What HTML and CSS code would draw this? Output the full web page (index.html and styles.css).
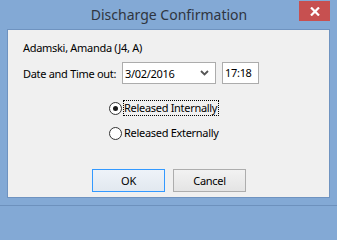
FILE: index.html
```html
<!DOCTYPE html>
<html>
<head>
<meta charset="utf-8">
<link rel="stylesheet" href="styles.css">
</head>
<body>
<div class="window">
  <div class="titlebar">
    <div class="title">Discharge Confirmation</div>
    <div class="close">
      <svg width="10" height="9" viewBox="0 0 10 9"><path d="M1 0.5 L9 8.5 M9 0.5 L1 8.5" stroke="#fff" stroke-width="2.2" fill="none"/></svg>
    </div>
  </div>
  <div class="client">
    <div class="patient">Adamski, Amanda (J4, A)</div>
    <div class="daterow">
      <div class="label">Date and Time out:</div>
      <div class="combo">
        <span class="combo-text">3/02/2016</span>
        <svg class="chev" width="9" height="6" viewBox="0 0 9 6"><path d="M1 1 L4.5 4.5 L8 1" stroke="#555" stroke-width="1.8" fill="none"/></svg>
      </div>
      <div class="timebox">17:18</div>
    </div>
    <div class="radios">
      <div class="radio">
        <span class="circle checked"></span>
        <span class="rlabel focus">Released Internally</span>
      </div>
      <div class="radio">
        <span class="circle"></span>
        <span class="rlabel">Released Externally</span>
      </div>
    </div>
    <div class="buttons">
      <div class="btn default">OK</div>
      <div class="btn">Cancel</div>
    </div>
  </div>
</div>
</body>
</html>
```

FILE: styles.css
```css
html, body {
  margin: 0;
  padding: 0;
  width: 337px;
  height: 206px;
  overflow: hidden;
}
body {
  background: #83a9d5;
  font-family: "Noto Sans", "Open Sans", sans-serif;
}
.window {
  width: 337px;
  height: 206px;
  box-sizing: border-box;
  background: #83a9d5;
  border-bottom: 1px solid #6d91bd;
  display: flex;
  flex-direction: column;
}
.titlebar {
  height: 29px;
  display: grid;
  grid-template-columns: 1fr auto 1fr;
  align-items: start;
}
.title {
  grid-column: 2;
  font-family: "Noto Sans", sans-serif;
  font-size: 14px;
  color: #2f3540;
  line-height: 20px;
  padding-top: 5px;
  padding-left: 1px;
  white-space: nowrap;
}
.close {
  grid-column: 3;
  justify-self: end;
  margin-right: 7px;
  margin-top: 1px;
  width: 31px;
  height: 20px;
  background: #c75050;
  display: flex;
  align-items: center;
  justify-content: center;
}
.client {
  margin-left: 7px;
  width: 323px;
  height: 169px;
  box-sizing: border-box;
  border: 1px solid #6f93c0;
  background: #f0f0f0;
  font-size: 11px;
  letter-spacing: -0.3px;
  color: #000;
  display: flex;
  flex-direction: column;
  padding-left: 15px;
  white-space: nowrap;
}
.patient {
  margin-top: 10px;
  line-height: 15px;
}
.daterow {
  margin-top: 7px;
  display: flex;
  align-items: center;
  height: 22px;
}
.label {
  width: 99px;
  line-height: 15px;
}
.combo {
  width: 94px;
  height: 22px;
  box-sizing: border-box;
  border: 1px solid #acacac;
  background: #fff;
  display: flex;
  align-items: center;
  justify-content: space-between;
  padding: 0 6px 0 2px;
}
.combo-text {
  line-height: 15px;
}
.chev {
  display: block;
}
.timebox {
  margin-left: 6px;
  width: 37px;
  height: 22px;
  box-sizing: border-box;
  border: 1px solid #acacac;
  background: #fff;
  padding-left: 2px;
  line-height: 20px;
}
.radios {
  margin-top: 16px;
  margin-left: 86px;
  display: flex;
  flex-direction: column;
  gap: 9px;
}
.radio {
  display: flex;
  align-items: center;
  height: 16px;
}
.circle {
  width: 13px;
  height: 13px;
  box-sizing: border-box;
  border-radius: 50%;
  border: 1px solid #333;
  background: #fff;
  display: flex;
  align-items: center;
  justify-content: center;
  margin-right: 1px;
}
.circle.checked::after {
  content: "";
  width: 5px;
  height: 5px;
  border-radius: 50%;
  background: #1a1a1a;
}
.rlabel {
  line-height: 14px;
  border: 1px solid transparent;
  padding: 0 1px 0 0;
}
.rlabel.focus {
  border: 1px dotted #000;
}
.buttons {
  margin-top: 28px;
  margin-left: 69px;
  display: flex;
  gap: 8px;
}
.btn {
  width: 73px;
  height: 23px;
  box-sizing: border-box;
  border: 1px solid #adadad;
  background: linear-gradient(#f2f2f2, #e4e4e4);
  display: flex;
  align-items: center;
  justify-content: center;
  line-height: 15px;
}
.btn.default {
  border-color: #3399ff;
  background: linear-gradient(#eef3f9, #e2e8ef);
}
```
